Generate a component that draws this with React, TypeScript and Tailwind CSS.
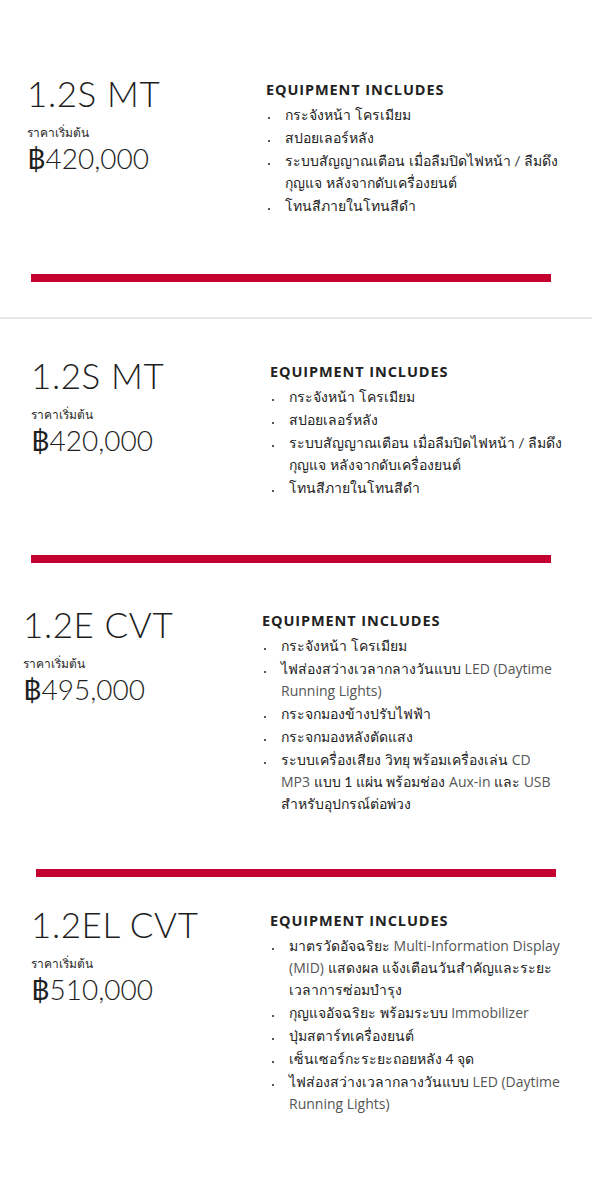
import React from "react";

// latin words inside thai list items are set in a wider, greyer face
const L = ({ children }: { children: React.ReactNode }) => (
  <span className="font-['Open_Sans'] text-[14px] text-[#555]">{children}</span>
);

interface Trim {
  name: string;
  price: string;
  items: React.ReactNode[];
  pad: string;
  gap: string;
}

const trims: Trim[] = [
  {
    name: "1.2S MT",
    price: "420,000",
    pad: "pl-[31px]",
    gap: "mt-[35px]",
    items: [
      "กระจังหน้า โครเมียม",
      "สปอยเลอร์หลัง",
      <>
        <span className="whitespace-nowrap">ระบบสัญญาณเตือน เมื่อลืมปิดไฟหน้า / ลืมดึง</span>
        <br />
        กุญแจ หลังจากดับเครื่องยนต์
      </>,
      "โทนสีภายในโทนสีดำ",
    ],
  },
  {
    name: "1.2E CVT",
    price: "495,000",
    pad: "pl-[23px]",
    gap: "mt-[40px]",
    items: [
      "กระจังหน้า โครเมียม",
      <>
        ไฟส่องสว่างเวลากลางวันแบบ <L>LED (Daytime Running Lights)</L>
      </>,
      "กระจกมองข้างปรับไฟฟ้า",
      "กระจกมองหลังตัดแสง",
      <>
        ระบบเครื่องเสียง วิทยุ พร้อมเครื่องเล่น <L>CD</L>
        <br />
        <L>MP3</L> แบบ 1 แผ่น พร้อมช่อง <L>Aux-in</L> และ <L>USB</L>
        <br />
        สำหรับอุปกรณ์ต่อพ่วง
      </>,
    ],
  },
  {
    name: "1.2EL CVT",
    price: "510,000",
    pad: "pl-[31px]",
    gap: "mt-[26px]",
    items: [
      <>
        มาตรวัดอัจฉริยะ <L>Multi-Information Display (MID)</L> แสดงผล แจ้งเตือนวันสำคัญและระยะเวลาการซ่อมบำรุง
      </>,
      <>
        กุญแจอัจฉริยะ พร้อมระบบ <L>Immobilizer</L>
      </>,
      "ปุ่มสตาร์ทเครื่องยนต์",
      "เซ็นเซอร์กะระยะถอยหลัง 4 จุด",
      <>
        ไฟส่องสว่างเวลากลางวันแบบ <L>LED (Daytime Running Lights)</L>
      </>,
    ],
  },
];

function TrimRow({ t, className = "" }: { t: Trim; className?: string }) {
  return (
    <div className={`flex items-start ${t.pad} ${className}`}>
      <div className="w-[239px] shrink-0 text-[#1e1e1e]">
        <h2 className="text-[35px] leading-[43px] font-light tracking-[0.6px]">{t.name}</h2>
        <p className="mt-[10px] text-[12px] leading-[16px] text-[#2a2a2a]">ราคาเริ่มต้น</p>
        <p className="text-[28px] leading-[34px] font-light">
          <span className="font-normal">฿</span>
          {t.price}
        </p>
      </div>
      <div className="w-[300px] pt-2">
        <h3 className="font-['Open_Sans'] text-[14.5px] leading-[20px] font-bold text-[#222] tracking-[0.9px]">
          EQUIPMENT INCLUDES
        </h3>
        <ul className="mt-[4px] flex flex-col gap-[1px]">
          {t.items.map((item, i) => (
            <li key={i} className="flex text-[14px] leading-[22px] text-[#222]">
              <span className="w-[19px] shrink-0 pt-[13px] pl-[2px]">
                <span className="block w-[2px] h-[2px] bg-[#555]" />
              </span>
              <span className="w-[284px]">{item}</span>
            </li>
          ))}
        </ul>
      </div>
    </div>
  );
}

const Bar = ({ className }: { className: string }) => (
  <div className={`h-2 w-[520px] bg-[#c3002f] ${className}`} />
);

export default function App() {
  const [first, ...rest] = trims;
  return (
    <div
      className="w-[592px] bg-white pt-[72px] pb-[64px]"
      style={{ fontFamily: "Lato, 'Noto Sans', sans-serif" }}
    >
      {/* first card */}
      <TrimRow t={{ ...first, pad: "pl-[27px]" }} />
      <Bar className="mt-[57px] ml-[31px]" />
      <div className="mt-[35px] h-[2px] bg-[#e8e8e8]" />

      {/* repeated cards below the divider */}
      <TrimRow t={first} className="mt-[35px]" />
      <Bar className="mt-[56px] ml-[31px]" />
      <TrimRow t={rest[0]} className={rest[0].gap} />
      <Bar className="mt-[54px] ml-[36px]" />
      <TrimRow t={rest[1]} className={rest[1].gap} />
    </div>
  );
}
